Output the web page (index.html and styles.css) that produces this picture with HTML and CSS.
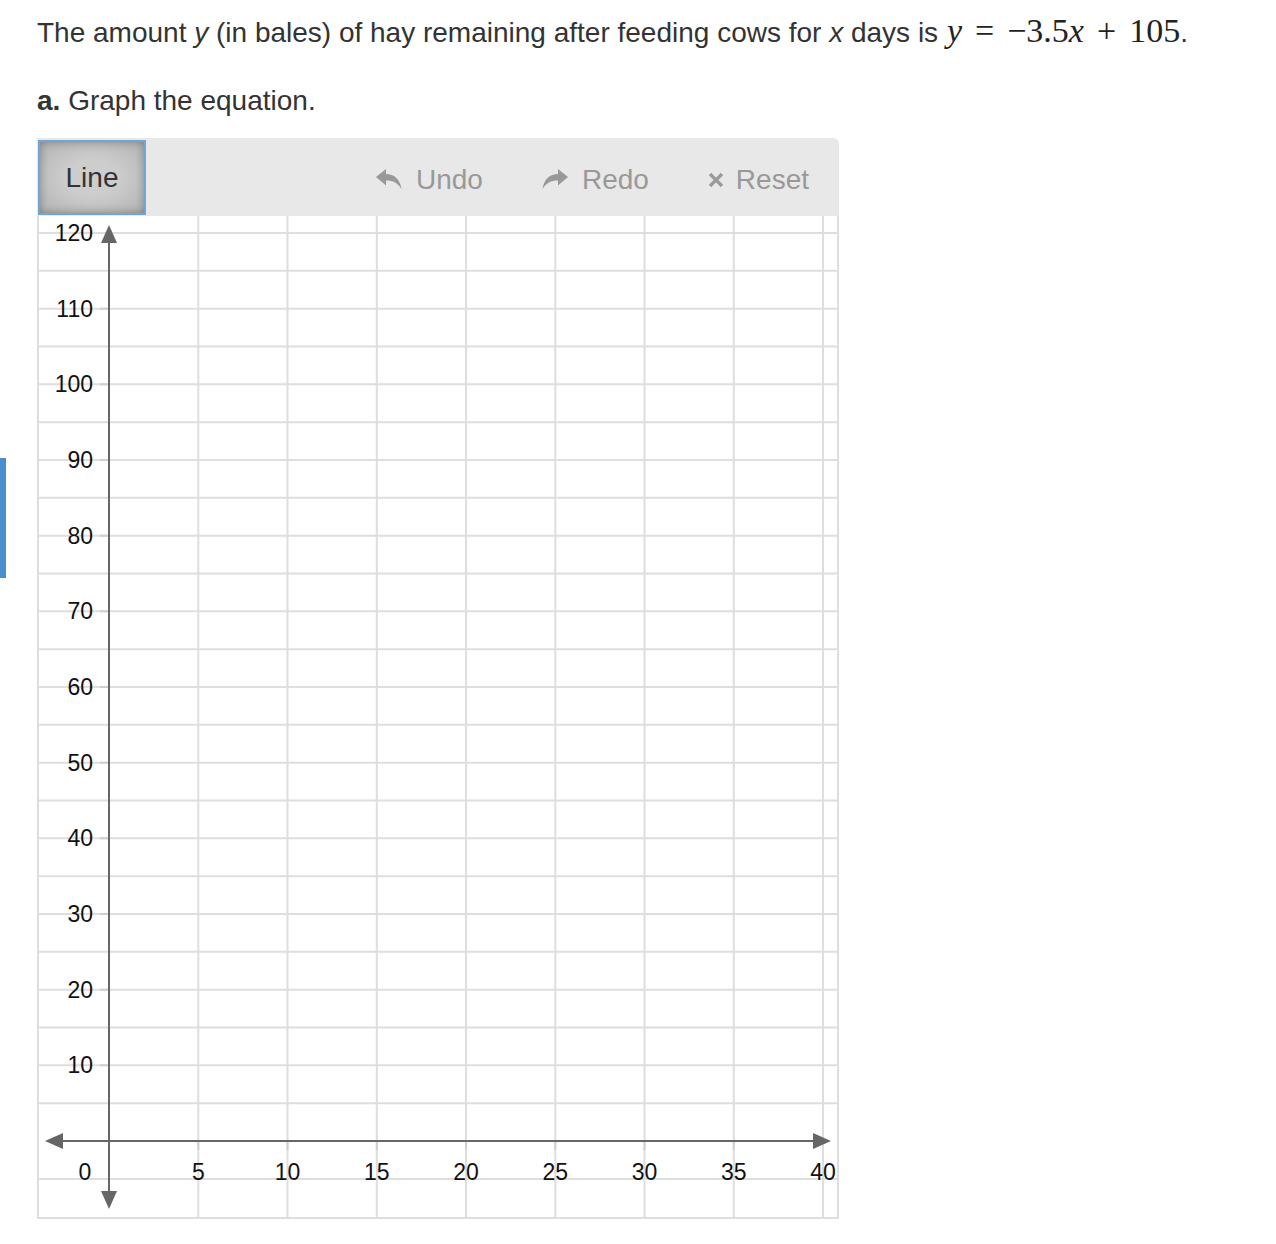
FILE: index.html
```html
<!DOCTYPE html>
<html>
<head>
<meta charset="utf-8">
<link rel="stylesheet" href="styles.css">
</head>
<body>
<div class="side-marker"></div>
<main class="page">
  <p class="prompt">The amount <i>y</i> (in bales) of hay remaining after feeding cows for <i>x</i> days is <span class="math"><i>y</i><span class="op">=</span>−3.5<i>x</i><span class="op">+</span>105</span>.</p>
  <p class="part"><b>a.</b> Graph the equation.</p>
  <section class="graph">
    <div class="toolbar">
      <button class="tool active">Line</button>
      <div class="actions">
        <button class="action">
          <svg class="ico" width="26" height="21" viewBox="0 0 26 21"><path d="M0 8 L10 0 V5 C18 5 24 10 25.5 20 C22 14 17 11.5 10 11.5 V16.5 Z" fill="#999"/></svg>
          <span>Undo</span>
        </button>
        <button class="action">
          <svg class="ico" width="26" height="21" viewBox="0 0 26 21"><path d="M26 8 L16 0 V5 C8 5 2 10 0.5 20 C4 14 9 11.5 16 11.5 V16.5 Z" fill="#999"/></svg>
          <span>Redo</span>
        </button>
        <button class="action">
          <svg class="ico x" width="16" height="16" viewBox="0 0 16 16"><path d="M2 2 L14 14 M14 2 L2 14" stroke="#999" stroke-width="3.2"/></svg>
          <span>Reset</span>
        </button>
      </div>
    </div>
    <svg class="plot" width="802" height="1003" viewBox="0 0 802 1003">
      <g class="grid" stroke="#dedede" stroke-width="2">
        <line x1="1" y1="0" x2="1" y2="1002"/>
        <line x1="801" y1="0" x2="801" y2="1002"/>
        <line x1="0" y1="1002" x2="802" y2="1002"/>
        <line x1="161.3" y1="0" x2="161.3" y2="1002"/>
        <line x1="250.5" y1="0" x2="250.5" y2="1002"/>
        <line x1="339.8" y1="0" x2="339.8" y2="1002"/>
        <line x1="429" y1="0" x2="429" y2="1002"/>
        <line x1="518.3" y1="0" x2="518.3" y2="1002"/>
        <line x1="607.5" y1="0" x2="607.5" y2="1002"/>
        <line x1="696.8" y1="0" x2="696.8" y2="1002"/>
        <line x1="786" y1="0" x2="786" y2="1002"/>
        <line x1="0" y1="17" x2="802" y2="17"/>
        <line x1="0" y1="54.8" x2="802" y2="54.8"/>
        <line x1="0" y1="92.7" x2="802" y2="92.7"/>
        <line x1="0" y1="130.5" x2="802" y2="130.5"/>
        <line x1="0" y1="168.3" x2="802" y2="168.3"/>
        <line x1="0" y1="206.2" x2="802" y2="206.2"/>
        <line x1="0" y1="244" x2="802" y2="244"/>
        <line x1="0" y1="281.8" x2="802" y2="281.8"/>
        <line x1="0" y1="319.7" x2="802" y2="319.7"/>
        <line x1="0" y1="357.5" x2="802" y2="357.5"/>
        <line x1="0" y1="395.3" x2="802" y2="395.3"/>
        <line x1="0" y1="433.2" x2="802" y2="433.2"/>
        <line x1="0" y1="471" x2="802" y2="471"/>
        <line x1="0" y1="508.8" x2="802" y2="508.8"/>
        <line x1="0" y1="546.7" x2="802" y2="546.7"/>
        <line x1="0" y1="584.5" x2="802" y2="584.5"/>
        <line x1="0" y1="622.3" x2="802" y2="622.3"/>
        <line x1="0" y1="660.2" x2="802" y2="660.2"/>
        <line x1="0" y1="698" x2="802" y2="698"/>
        <line x1="0" y1="735.8" x2="802" y2="735.8"/>
        <line x1="0" y1="773.7" x2="802" y2="773.7"/>
        <line x1="0" y1="811.5" x2="802" y2="811.5"/>
        <line x1="0" y1="849.3" x2="802" y2="849.3"/>
        <line x1="0" y1="887.2" x2="802" y2="887.2"/>
        <line x1="0" y1="963" x2="802" y2="963"/>
      </g>
      <g class="ticks" stroke="#cfcfcf" stroke-width="2">
        <line x1="63" y1="92.7" x2="72" y2="92.7"/>
        <line x1="63" y1="168.3" x2="72" y2="168.3"/>
        <line x1="63" y1="244" x2="72" y2="244"/>
        <line x1="63" y1="319.7" x2="72" y2="319.7"/>
        <line x1="63" y1="395.3" x2="72" y2="395.3"/>
        <line x1="63" y1="471" x2="72" y2="471"/>
        <line x1="63" y1="546.7" x2="72" y2="546.7"/>
        <line x1="63" y1="622.3" x2="72" y2="622.3"/>
        <line x1="63" y1="698" x2="72" y2="698"/>
        <line x1="63" y1="773.7" x2="72" y2="773.7"/>
        <line x1="63" y1="849.3" x2="72" y2="849.3"/>
        <line x1="161.3" y1="925" x2="161.3" y2="934"/>
        <line x1="250.5" y1="925" x2="250.5" y2="934"/>
        <line x1="339.8" y1="925" x2="339.8" y2="934"/>
        <line x1="429" y1="925" x2="429" y2="934"/>
        <line x1="518.3" y1="925" x2="518.3" y2="934"/>
        <line x1="607.5" y1="925" x2="607.5" y2="934"/>
        <line x1="696.8" y1="925" x2="696.8" y2="934"/>
      </g>
      <g class="axes" stroke="#666" stroke-width="2" fill="#666">
        <line x1="72" y1="20" x2="72" y2="982"/>
        <line x1="18" y1="925" x2="782" y2="925"/>
        <path d="M72 9 L80 27 L64 27 Z" stroke="none"/>
        <path d="M72 993 L80 975 L64 975 Z" stroke="none"/>
        <path d="M8 925 L26 917 L26 933 Z" stroke="none"/>
        <path d="M794 925 L776 917 L776 933 Z" stroke="none"/>
      </g>
      <g class="ylabels" font-family="'Liberation Sans', Arial, sans-serif" font-size="23" fill="#111" text-anchor="end">
        <text x="56" y="25">120</text>
        <text x="56" y="100.7">110</text>
        <text x="56" y="176.3">100</text>
        <text x="56" y="252">90</text>
        <text x="56" y="327.7">80</text>
        <text x="56" y="403.3">70</text>
        <text x="56" y="479">60</text>
        <text x="56" y="554.7">50</text>
        <text x="56" y="630.3">40</text>
        <text x="56" y="706">30</text>
        <text x="56" y="781.7">20</text>
        <text x="56" y="857.3">10</text>
      </g>
      <g class="xlabels" font-family="'Liberation Sans', Arial, sans-serif" font-size="23" fill="#111" text-anchor="middle">
        <text x="48" y="964">0</text>
        <text x="161.3" y="964">5</text>
        <text x="250.5" y="964">10</text>
        <text x="339.8" y="964">15</text>
        <text x="429" y="964">20</text>
        <text x="518.3" y="964">25</text>
        <text x="607.5" y="964">30</text>
        <text x="696.8" y="964">35</text>
        <text x="786" y="964">40</text>
      </g>
    </svg>
  </section>
</main>
</body>
</html>
```
FILE: styles.css
```css
html, body {
  margin: 0;
  padding: 0;
  background: #fff;
}
body {
  font-family: "Liberation Sans", Arial, sans-serif;
  color: #333;
}
.side-marker {
  position: absolute;
  left: 0;
  top: 458px;
  width: 6px;
  height: 120px;
  background: #4a8fcb;
}
.page {
  padding: 15px 37px 20px;
}
.prompt {
  margin: 0;
  font-size: 28px;
  line-height: 32px;
}
.prompt i {
  font-style: italic;
}
.math {
  font-family: "Liberation Serif", "Times New Roman", serif;
  font-size: 34px;
  color: #222;
  margin-left: 1px;
}
.math i {
  font-style: italic;
}
.math .op {
  margin: 0 13px;
}
.part {
  margin: 36px 0 0;
  font-size: 28px;
  line-height: 32px;
}
.part b {
  font-weight: bold;
}
.graph {
  margin-top: 21px;
  width: 802px;
}
.toolbar {
  display: flex;
  align-items: stretch;
  height: 78px;
  background: #e8e8e8;
  border-top-right-radius: 6px;
}
.tool {
  margin: 2px 0 1px 1px;
  width: 108px;
  border: 2px solid #6ea6d8;
  background: radial-gradient(ellipse at center, #cdcdcd 35%, #b2b2b2 100%);
  box-shadow: inset 0 0 9px rgba(0,0,0,0.3);
  font-family: "Liberation Sans", Arial, sans-serif;
  font-size: 28px;
  color: #333;
  padding: 1px 0 0;
  cursor: pointer;
}
.actions {
  margin-left: auto;
  display: flex;
  align-items: stretch;
}
.action {
  display: flex;
  align-items: center;
  gap: 14px;
  padding: 5px 30px 0 29px;
  border: none;
  background: transparent;
  font-family: "Liberation Sans", Arial, sans-serif;
  font-size: 28px;
  color: #999;
}
.action .ico.x {
  margin-right: -2px;
}
.plot {
  display: block;
}
```
